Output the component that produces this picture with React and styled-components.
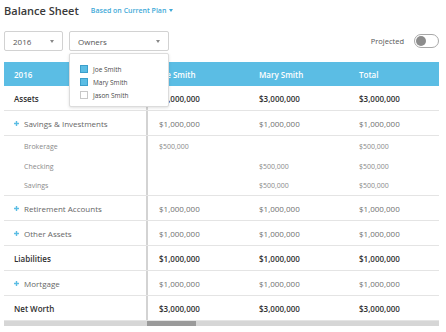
import React from "react";
import styled, { createGlobalStyle } from "styled-components";

const GlobalStyle = createGlobalStyle`
  html, body { margin: 0; padding: 0; background: #fff; }
  body { font-family: "Open Sans", "Liberation Sans", sans-serif; color: #333; }
  * { box-sizing: border-box; }
`;

const BLUE = "#5bbde4";

const Page = styled.div`
  width: 446px;
  height: 332px;
  padding: 0 7px 0 4px;
  overflow: hidden;
`;

const TitleRow = styled.div`
  height: 21px;
  display: flex;
  align-items: center;
  gap: 12px;
`;

const Title = styled.h1`
  margin: 0;
  font-size: 11px;
  font-weight: 600;
  color: #3a3a3a;
`;

const PlanLink = styled.span`
  font-size: 7px;
  font-weight: 600;
  color: #3fa9d8;
  display: flex;
  align-items: center;
  gap: 3px;
`;

const Controls = styled.div`
  margin-top: 10px;
  height: 20px;
  display: flex;
  align-items: center;
  gap: 6px;
`;

const SelectWrap = styled.div`
  position: relative;
`;

const Select = styled.div`
  width: ${(p) => p.$w}px;
  height: 20px;
  border: 1px solid #d2d2d2;
  border-radius: 2px;
  padding: 0 8px;
  display: flex;
  align-items: center;
  justify-content: space-between;
  font-size: 8px;
  color: #555;
  background: #fff;
`;

const Caret = styled.span`
  width: 0;
  height: 0;
  border-left: ${(p) => p.$s || 2.5}px solid transparent;
  border-right: ${(p) => p.$s || 2.5}px solid transparent;
  border-top: ${(p) => (p.$s || 2.5) + 0.5}px solid ${(p) => p.$c || "#888"};
`;

const Menu = styled.div`
  position: absolute;
  left: 0;
  top: 22px;
  width: 100px;
  height: 54px;
  background: #fff;
  border: 1px solid #dcdcdc;
  border-radius: 2px;
  box-shadow: 0 1px 3px rgba(0, 0, 0, 0.12);
  padding: 11px 0 0 10px;
  display: flex;
  flex-direction: column;
  gap: 5px;
  z-index: 5;
`;

const MenuItem = styled.div`
  display: flex;
  align-items: center;
  gap: 5px;
  height: 8px;
  font-size: 6.5px;
  color: #4a4a4a;
`;

const Check = styled.span`
  width: 8px;
  height: 8px;
  border: 1px solid ${(p) => (p.$on ? "#3c9fcb" : "#c8c8c8")};
  background: ${(p) => (p.$on ? BLUE : "#fff")};
`;

const Spacer = styled.div`
  flex: 1;
`;

const ToggleLabel = styled.span`
  font-size: 7.5px;
  color: #555;
  margin-right: 4px;
`;

const Toggle = styled.div`
  width: 25px;
  height: 14px;
  border: 1.5px solid #a8a8a8;
  border-radius: 7px;
  padding: 1px;
  display: flex;
  align-items: center;
`;

const Knob = styled.span`
  width: 10px;
  height: 10px;
  border-radius: 50%;
  background: #8c8c8c;
`;

const TableWrap = styled.div`
  margin-top: 11px;
  width: 435px;
  overflow: hidden;
`;

const Row = styled.div`
  display: grid;
  grid-template-columns: 144px 100px 100px 100px;
  width: 444px;
  height: ${(p) => p.$h}px;
  align-items: stretch;
  border-bottom: ${(p) => (p.$line ? "1px solid #e4e4e4" : "none")};
  background: ${(p) => (p.$head ? BLUE : "#fff")};
`;

const Cell = styled.div`
  display: flex;
  align-items: center;
  padding-left: ${(p) => (p.$first ? 10 : 11)}px;
  font-size: ${(p) => (p.$sub ? 7 : 8)}px;
  font-weight: ${(p) => (p.$bold ? 600 : 400)};
  color: ${(p) => p.$color};
  white-space: nowrap;
  border-right: ${(p) => (p.$first && !p.$head ? "2px solid #d3d3d3" : "none")};
`;

const Label = styled.span`
  display: flex;
  align-items: center;
  gap: 5px;
  padding-left: ${(p) => (p.$indent ? 10 : 0)}px;
`;

const PlusIcon = () => (
  <svg width="5" height="5" viewBox="0 0 5 5" style={{ display: "block" }}>
    <path d="M2.5 0v5M0 2.5h5" stroke={BLUE} strokeWidth="1.4" />
  </svg>
);

const ScrollBar = styled.div`
  width: 435px;
  height: 5px;
  background: #d6d6d6;
  padding-left: 143px;
  display: flex;
`;

const Thumb = styled.div`
  width: 49px;
  height: 5px;
  background: #9a9a9a;
`;

const rows = [
  { type: "bold", label: "Assets", v: ["$3,000,000", "$3,000,000", "$3,000,000"] },
  { type: "plus", label: "Savings & Investments", v: ["$1,000,000", "$1,000,000", "$1,000,000"] },
  { type: "sub", label: "Brokerage", v: ["$500,000", "", "$500,000"] },
  { type: "sub", label: "Checking", v: ["", "$500,000", "$500,000"] },
  { type: "sub", label: "Savings", v: ["", "$500,000", "$500,000"], last: true },
  { type: "plus", label: "Retirement Accounts", v: ["$1,000,000", "$1,000,000", "$1,000,000"] },
  { type: "plus", label: "Other Assets", v: ["$1,000,000", "$1,000,000", "$1,000,000"] },
  { type: "bold", label: "Liabilities", v: ["$1,000,000", "$1,000,000", "$1,000,000"] },
  { type: "plus", label: "Mortgage", v: ["$1,000,000", "$1,000,000", "$1,000,000"] },
  { type: "bold", label: "Net Worth", v: ["$3,000,000", "$3,000,000", "$3,000,000"] },
];

const colorFor = (t, isLabel) =>
  t === "bold" ? "#2f2f2f" : t === "sub" ? "#8a8a8a" : isLabel ? "#666" : "#707070";

export default function App() {
  return (
    <Page>
      <GlobalStyle />
      <TitleRow>
        <Title>Balance Sheet</Title>
        <PlanLink>
          Based on Current Plan <Caret $s={2.5} $c="#3fa9d8" />
        </PlanLink>
      </TitleRow>
      <Controls>
        <Select $w={59}>
          2016 <Caret />
        </Select>
        <SelectWrap>
          <Select $w={100}>
            Owners <Caret />
          </Select>
          <Menu>
            <MenuItem>
              <Check $on /> Joe Smith
            </MenuItem>
            <MenuItem>
              <Check $on /> Mary Smith
            </MenuItem>
            <MenuItem>
              <Check /> Jason Smith
            </MenuItem>
          </Menu>
        </SelectWrap>
        <Spacer />
        <ToggleLabel>Projected</ToggleLabel>
        <Toggle>
          <Knob />
        </Toggle>
      </Controls>
      <TableWrap>
        <Row $h={24} $head>
          {["2016", "Joe Smith", "Mary Smith", "Total"].map((h, i) => (
            <Cell key={h} $first={i === 0} $head $bold $color="#fff">
              {h}
            </Cell>
          ))}
        </Row>
        {rows.map((r) => {
          const sub = r.type === "sub";
          const h = sub ? 20 : 25;
          const line = !sub || r.last;
          return (
            <Row key={r.label} $h={h} $line={line}>
              <Cell $first $sub={sub} $bold={r.type === "bold"} $color={colorFor(r.type, true)}>
                <Label $indent={sub}>
                  {r.type === "plus" && <PlusIcon />}
                  {r.label}
                </Label>
              </Cell>
              {r.v.map((v, i) => (
                <Cell key={i} $sub={sub} $bold={r.type === "bold"} $color={colorFor(r.type, false)}>
                  {v}
                </Cell>
              ))}
            </Row>
          );
        })}
        <ScrollBar>
          <Thumb />
        </ScrollBar>
      </TableWrap>
    </Page>
  );
}
